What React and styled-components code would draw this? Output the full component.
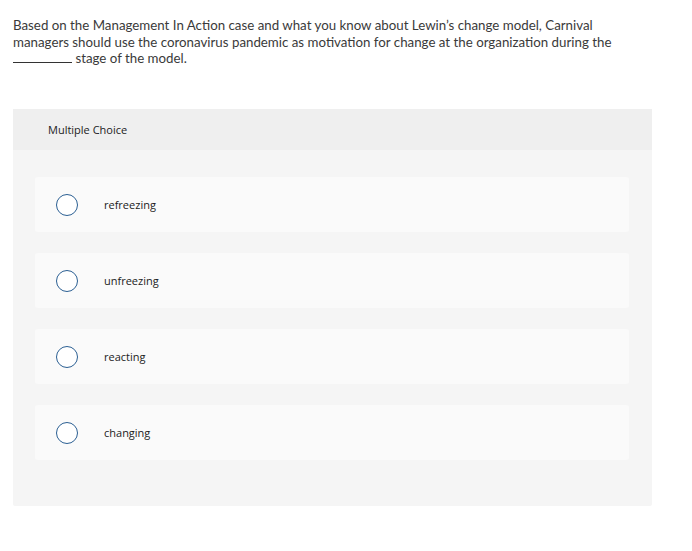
import React, { useState } from "react";
import styled, { createGlobalStyle } from "styled-components";

const GlobalStyle = createGlobalStyle`
  html, body {
    margin: 0;
    padding: 0;
    background: #ffffff;
  }
  body {
    font-family: "Lato", "Open Sans", sans-serif;
  }
`;

const choices = ["refreezing", "unfreezing", "reacting", "changing"];

function App() {
  const [picked, setPicked] = useState(null);

  return (
    <>
      <GlobalStyle />
      <Page>
        <Question>
          Based on the Management In Action case and what you know about
          Lewin’s change model, Carnival managers should use the coronavirus
          pandemic as motivation for change at the organization during the{" "}
          <Blank /> stage of the model.
        </Question>
        <Panel>
          <PanelHeader>Multiple Choice</PanelHeader>
          <Choices>
            {choices.map((c, i) => (
              <Choice key={c} onClick={() => setPicked(i)}>
                <Radio $checked={picked === i} />
                <ChoiceLabel>{c}</ChoiceLabel>
              </Choice>
            ))}
          </Choices>
        </Panel>
      </Page>
    </>
  );
}
export default App;

const Page = styled.div`
  padding: 17px 40px 0 13px;
`;

const Question = styled.p`
  margin: 0;
  max-width: 622px;
  font-family: "Lato", "Open Sans", sans-serif;
  font-size: 13.3px;
  line-height: 16.7px;
  color: #3a3a3a;
`;

const Blank = styled.span`
  display: inline-block;
  width: 59px;
  border-bottom: 1px solid #333333;
  vertical-align: baseline;
`;

const Panel = styled.div`
  margin-top: 42px;
  width: 639px;
  background: #f5f5f5;
  border-radius: 2px;
  padding-bottom: 46px;
`;

const PanelHeader = styled.div`
  height: 41px;
  display: flex;
  align-items: center;
  padding-left: 35px;
  background: #efefef;
  font-family: "Open Sans", sans-serif;
  font-size: 11px;
  color: #222222;
`;

const Choices = styled.div`
  display: flex;
  flex-direction: column;
  gap: 21px;
  padding: 27px 23px 0 22px;
`;

const Choice = styled.div`
  height: 55px;
  display: flex;
  align-items: center;
  padding-left: 21px;
  background: #fafafa;
  border-radius: 3px;
  cursor: pointer;
`;

const Radio = styled.span`
  width: 20px;
  height: 20px;
  border-radius: 50%;
  border: 1.5px solid #2b5f93;
  background: ${(p) => (p.$checked ? "#2b5f93" : "#ffffff")};
  box-shadow: inset 0 0 0 ${(p) => (p.$checked ? "5px" : "0")} #ffffff;
  flex-shrink: 0;
`;

const ChoiceLabel = styled.span`
  margin-left: 26px;
  font-family: "Open Sans", sans-serif;
  font-size: 11px;
  color: #222222;
`;
